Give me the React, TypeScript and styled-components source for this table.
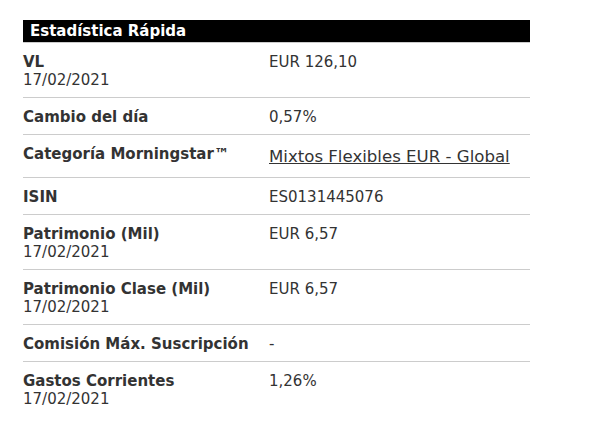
import React from "react";
import styled, { createGlobalStyle } from "styled-components";

const Global = createGlobalStyle`
  html, body { margin: 0; padding: 0; background: #fff; }
  body { font-family: "DejaVu Sans", Verdana, sans-serif; color: #333; }
`;

const Panel = styled.section`
  width: 507px;
  margin: 20px 0 0 23px;
  font-size: 15px;
  line-height: 18px;
`;

const Header = styled.h3`
  margin: 0;
  background: #000;
  color: #fff;
  font-size: 15px;
  font-weight: bold;
  line-height: 18px;
  padding: 2px 8px 2px 7px;
  border-bottom: 1px solid #cccccc;
`;

const Row = styled.div<{ $last?: boolean }>`
  display: grid;
  grid-template-columns: 246px 1fr;
  padding: 10px 0 8px;
  border-bottom: ${(p) => (p.$last ? "none" : "1px solid #cccccc")};
`;

const Label = styled.div`
  font-weight: bold;
`;

const DateLine = styled.div`
  font-weight: normal;
`;

const Value = styled.div``;

const CategoryLink = styled.a`
  color: #333;
  text-decoration: underline;
  font-size: 16.6px;
  line-height: 24px;
  display: inline-block;
`;

type Item = { label: string; date?: string; value: React.ReactNode };

const items: Item[] = [
  { label: "VL", date: "17/02/2021", value: "EUR 126,10" },
  { label: "Cambio del día", value: "0,57%" },
  {
    label: "Categoría Morningstar™",
    value: <CategoryLink href="#">Mixtos Flexibles EUR - Global</CategoryLink>,
  },
  { label: "ISIN", value: "ES0131445076" },
  { label: "Patrimonio (Mil)", date: "17/02/2021", value: "EUR 6,57" },
  { label: "Patrimonio Clase (Mil)", date: "17/02/2021", value: "EUR 6,57" },
  { label: "Comisión Máx. Suscripción", value: "-" },
  { label: "Gastos Corrientes", date: "17/02/2021", value: "1,26%" },
];

export default function App() {
  return (
    <>
      <Global />
      <Panel>
        <Header>Estadística Rápida</Header>
        {items.map((it, i) => (
          <Row key={it.label} $last={i === items.length - 1}>
            <Label>
              {it.label}
              {it.date && <DateLine>{it.date}</DateLine>}
            </Label>
            <Value>{it.value}</Value>
          </Row>
        ))}
      </Panel>
    </>
  );
}
